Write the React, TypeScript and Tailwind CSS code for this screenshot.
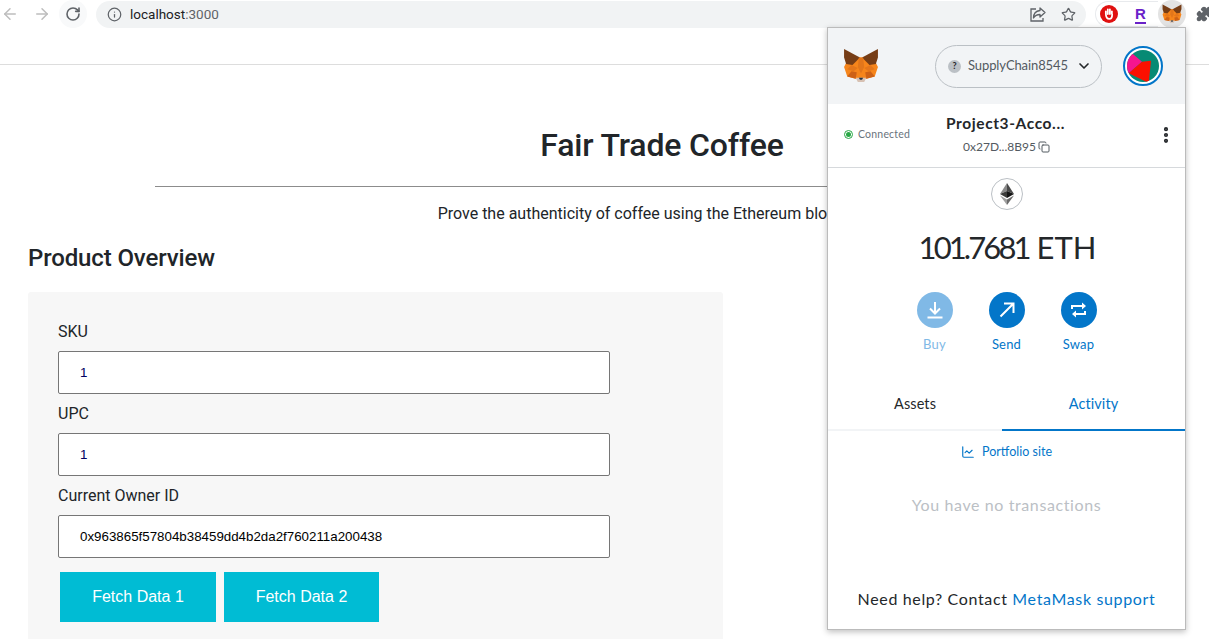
import React from "react";
import { Info, ChevronDown, MoreVertical, Copy, LineChart, ArrowLeft, ArrowRight, RotateCw, Star, Puzzle } from "lucide-react";

function Fox({ size }: { size: number }) {
  return (
    <svg width={size} height={size} viewBox="0 0 34 34" className="shrink-0">
      <polygon points="3,14 8,15 15,9 19,9 26,15 31,14 33,18 30,27 22,29 12,29 4,27 1,18" fill="#f6851b" />
      <polygon points="1,1 16,9 9,16 3,15 1,9" fill="#763d16" />
      <polygon points="33,1 18,9 25,16 31,15 33,9" fill="#763d16" />
      <polygon points="8,16 14,19 10,22 4,20" fill="#e4761b" />
      <polygon points="26,16 20,19 24,22 30,20" fill="#e4761b" />
      <polygon points="15,9 19,9 20,18 17,24 14,18" fill="#e2761b" />
      <polygon points="4,27 12,29 13,23 8,22" fill="#cd6116" />
      <polygon points="30,27 22,29 21,23 26,22" fill="#cd6116" />
      <polygon points="12,28 22,28 20,32 14,32" fill="#d7c1b3" />
      <polygon points="15,28 19,28 18,30 16,30" fill="#233447" />
    </svg>
  );
}

function ActionButton({ label, light, children }: { label: string; light?: boolean; children: React.ReactNode }) {
  return (
    <div className="flex w-[72px] flex-col items-center">
      <div className={`flex h-9 w-9 items-center justify-center rounded-full text-white ${light ? "bg-[#80b9e6]" : "bg-[#0376c9]"}`}>
        {children}
      </div>
      <div className={`mt-[8px] text-[13px] leading-[16px] tracking-[0.2px] ${light ? "text-[#80b9e6]" : "text-[#0376c9]"}`}>{label}</div>
    </div>
  );
}

function Field({ label, value, mono }: { label: string; value: string; mono?: boolean }) {
  return (
    <div className="flex flex-col">
      <label className="h-[28px] text-[16px] leading-[18px] text-[#212529]">{label}</label>
      <div
        className={`flex h-[43px] w-[552px] items-center rounded-[2px] border border-[#767676] bg-white pl-[21px] font-['Liberation_Sans',sans-serif] text-[13.33px] ${mono ? "text-black" : "text-[#000060]"}`}
      >
        {value}
      </div>
    </div>
  );
}

function Popup() {
  return (
    <div className="absolute left-[827px] top-[27px] flex h-[603px] w-[359px] flex-col overflow-hidden border border-[#bbbbbb] bg-white font-['Lato',sans-serif] shadow-[0_2px_6px_rgba(0,0,0,0.25)]">
      <div className="flex h-[76px] shrink-0 items-center bg-[#f2f4f6] pl-[15px] pr-[22px]">
        <Fox size={36} />
        <div className="ml-[56px] flex h-[43px] w-[167px] items-center rounded-full border border-[#bbc0c5] pl-[12px] pr-[9px] text-[#6a737d]">
          <span className="flex h-[13px] w-[13px] items-center justify-center rounded-full bg-[#bbc0c5] text-[9px] font-bold text-[#24272a]">?</span>
          <span className="ml-[7px] whitespace-nowrap text-[13px] tracking-[-0.1px] text-[#535a61]">SupplyChain8545</span>
          <ChevronDown size={16} strokeWidth={2.5} className="ml-auto text-[#24272a]" />
        </div>
        <div className="ml-auto flex h-10 w-10 items-center justify-center rounded-full border-2 border-[#0376c9] bg-white">
          <svg width="32" height="32" viewBox="0 0 32 32">
            <clipPath id="ident"><circle cx="16" cy="16" r="16" /></clipPath>
            <g clipPath="url(#ident)">
              <rect width="32" height="32" fill="#078a74" />
              <polygon points="5,3.3 15,11.7 2,23 -3,23 -3,3.3" fill="#f5158e" />
              <polygon points="15,11.7 24,10.7 21.7,33 1.7,23.3" fill="#fb1000" />
            </g>
          </svg>
        </div>
      </div>

      <div className="relative flex h-[64px] shrink-0 items-center border-b border-[#d6d9dc]">
        <div className="absolute left-[16px] top-[24px] flex items-center">
          <span className="flex h-[9px] w-[9px] items-center justify-center rounded-full border border-[#28a745]">
            <span className="h-[5px] w-[5px] rounded-full bg-[#28a745]" />
          </span>
          <span className="ml-[5px] text-[10.5px] leading-[12px] tracking-[0.2px] text-[#6a737d]">Connected</span>
        </div>
        <div className="ml-[116px] flex w-[123px] flex-col items-center">
          <div className="-mt-[2px] whitespace-nowrap text-[15.5px] font-bold leading-[18px] tracking-[0.6px] text-[#24272a]">Project3-Acco...</div>
          <div className="ml-[2px] mt-[7px] flex items-center text-[12px] leading-[16px] text-[#535a61]">
            <span>0x27D...8B95</span>
            <Copy size={12} className="ml-[2px] text-[#535a61]" />
          </div>
        </div>
        <MoreVertical size={20} strokeWidth={3} className="absolute left-[328px] top-[21px] text-[#24272a]" />
      </div>

      <div className="flex flex-col items-center pt-[10px]">
        <div className="flex h-8 w-8 items-center justify-center rounded-full border border-[#bbc0c5]">
          <svg width="14" height="22" viewBox="0 0 14 22">
            <polygon points="7,0 0,11 7,8" fill="#8a8a8a" />
            <polygon points="7,0 14,11 7,8" fill="#4a4a4a" />
            <polygon points="7,8 0,11 7,15" fill="#3c3c3b" />
            <polygon points="7,8 14,11 7,15" fill="#141414" />
            <polygon points="0,12.5 7,22 7,16.5" fill="#a0a0a0" />
            <polygon points="14,12.5 7,22 7,16.5" fill="#6a6a6a" />
          </svg>
        </div>
        <div className="mt-[19px] flex h-[36px] items-center whitespace-nowrap pl-[2px] text-[31px] leading-[36px] text-[#24272a]">
          <span className="tracking-[-2.9px]">101.7681</span>
          <span className="ml-[8px]">ETH</span>
        </div>
        <div className="mt-[27px] flex">
          <ActionButton label="Buy" light>
            <svg width="20" height="20" viewBox="0 0 20 20" fill="none" stroke="currentColor" strokeWidth="2">
              <path d="M10 2v11M5 8.5l5 5 5-5M2.5 17.5h15" />
            </svg>
          </ActionButton>
          <ActionButton label="Send">
            <svg width="18" height="18" viewBox="0 0 18 18" fill="none" stroke="currentColor" strokeWidth="2">
              <path d="M2.5 15.5L15 3M6 2.5h9.5V12" />
            </svg>
          </ActionButton>
          <ActionButton label="Swap">
            <svg width="18" height="18" viewBox="0 0 18 18" fill="none" stroke="currentColor" strokeWidth="2">
              <path d="M2 8V5h11M15 10v3H4" />
              <path d="M12 1.5L16 5l-4 3.5zM6 9.5L2 13l4 3.5z" fill="currentColor" stroke="none" />
            </svg>
          </ActionButton>
        </div>
      </div>

      <div className="mt-[26px] flex h-[53px] shrink-0 border-b-2 border-[#f2f4f6]">
        <div className="flex w-[174px] items-center justify-center pt-[1px] text-[14.5px] tracking-[0.1px] text-[#24272a]">Assets</div>
        <div className="-mb-[2px] flex flex-1 items-center justify-center border-b-2 border-[#0376c9] pt-[1px] text-[14.5px] tracking-[0.1px] text-[#0376c9]">Activity</div>
      </div>
      <div className="mt-[13px] flex items-center justify-center text-[12.5px] leading-[16px] text-[#0376c9]">
        <LineChart size={14} className="mr-[7px]" />
        <span>Portfolio site</span>
      </div>
      <div className="mt-[35px] text-center text-[16px] leading-[20px] tracking-[0.6px] text-[#bbc0c5]">You have no transactions</div>
      <div className="mt-auto pb-[20px] text-center text-[16px] leading-[20px] tracking-[0.65px] text-[#24272a]">
        Need help? Contact <span className="text-[#0376c9]">MetaMask support</span>
      </div>
    </div>
  );
}

export default function App() {
  return (
    <div className="relative h-[639px] w-[1209px] overflow-hidden bg-white font-['Roboto',sans-serif]">
      <div className="flex h-[28px] items-center">
        <ArrowLeft size={18} className="ml-[1px] shrink-0 text-[#bdbdbd]" />
        <ArrowRight size={18} className="ml-[14px] shrink-0 text-[#bdbdbd]" />
        <div className="ml-[8px] flex h-7 w-7 shrink-0 items-center justify-center rounded-full bg-[#f8f9fa]">
          <RotateCw size={16} strokeWidth={2.4} className="text-[#5f6368]" />
        </div>
        <div className="ml-[9px] flex h-[27px] w-[990px] shrink-0 items-center rounded-full bg-[#f1f3f4] pl-[11px]">
          <Info size={15} className="text-[#5f6368]" />
          <span className="ml-[8px] text-[13.5px] text-[#202124]">localhost<span className="text-[#5f6368]">:3000</span></span>
          <svg width="18" height="18" viewBox="0 0 18 18" fill="none" stroke="#5f6368" strokeWidth="1.3" className="ml-auto">
            <path d="M11 3l5 4.5-5 4.5V9.5C8 9.5 6 10.5 4.5 13 4.5 9 7 6 11 5.5z" strokeLinejoin="round" />
            <path d="M7 4H2v12h12v-3" />
          </svg>
          <Star size={15} strokeWidth={2} className="ml-[14px] mr-[10px] text-[#5f6368]" />
        </div>
        <div className="ml-[9px] flex h-[26px] w-[63px] shrink-0 items-center rounded-l-full border border-r-0 border-[#e8eaed] pl-[4px]">
          <svg width="18" height="18" viewBox="0 0 20 20" className="shrink-0">
            <circle cx="10" cy="10" r="10" fill="#e01010" />
            <path d="M6.5 10V7M8.7 10V5M11 10V5M13.2 10V7M6.5 9.5c0 4 1.5 6 4 6s3-2 3-5" stroke="#fff" strokeWidth="2" fill="none" strokeLinecap="round" />
          </svg>
          <span className="relative ml-[17px] font-['Liberation_Sans',sans-serif] text-[15px] font-bold leading-[16px] text-[#6a22c9]">
            R
            <span className="absolute -bottom-[2px] left-0 h-[2px] w-[11px] bg-[#6a22c9]" />
          </span>
        </div>
        <div className="flex h-7 w-7 shrink-0 items-center justify-center rounded-full bg-[#e3e3e3]">
          <Fox size={20} />
        </div>
        <Puzzle size={16} fill="#5f6368" className="ml-[10px] shrink-0 text-[#5f6368]" />
      </div>

      <div className="h-[37px] border-b border-[#dddddd]" />

      <div className="ml-[155px] mr-[40px] flex flex-col items-center">
        <h1 className="mt-[60px] text-[32px] font-medium leading-[40px] tracking-[-0.15px] text-[#212529]">Fair Trade Coffee</h1>
        <div className="mt-[21px] h-px w-full bg-[#8c8c8c]" />
        <p className="mt-[17px] whitespace-nowrap text-[16px] leading-[20px] text-[#212529]">Prove the authenticity of coffee using the Ethereum blockchain.</p>
      </div>

      <h2 className="ml-[28px] mt-[18px] text-[24px] font-medium leading-[32px] tracking-[-0.13px] text-[#212529]">Product Overview</h2>

      <div className="ml-[28px] mt-[18px] h-[400px] w-[695px] rounded-[3px] bg-[#f7f7f7] pl-[30px] pt-[31px]">
        <div className="flex flex-col gap-[11px]">
          <Field label="SKU" value="1" />
          <Field label="UPC" value="1" />
          <Field label="Current Owner ID" value="0x963865f57804b38459dd4b2da2f760211a200438" mono />
        </div>
        <div className="ml-[2px] mt-[14px] flex gap-[8px] font-['Liberation_Sans',sans-serif] text-[16px] text-white">
          <button className="h-[50px] w-[156px] bg-[#00bcd4]">Fetch Data 1</button>
          <button className="h-[50px] w-[155px] bg-[#00bcd4]">Fetch Data 2</button>
        </div>
      </div>

      <Popup />
    </div>
  );
}
